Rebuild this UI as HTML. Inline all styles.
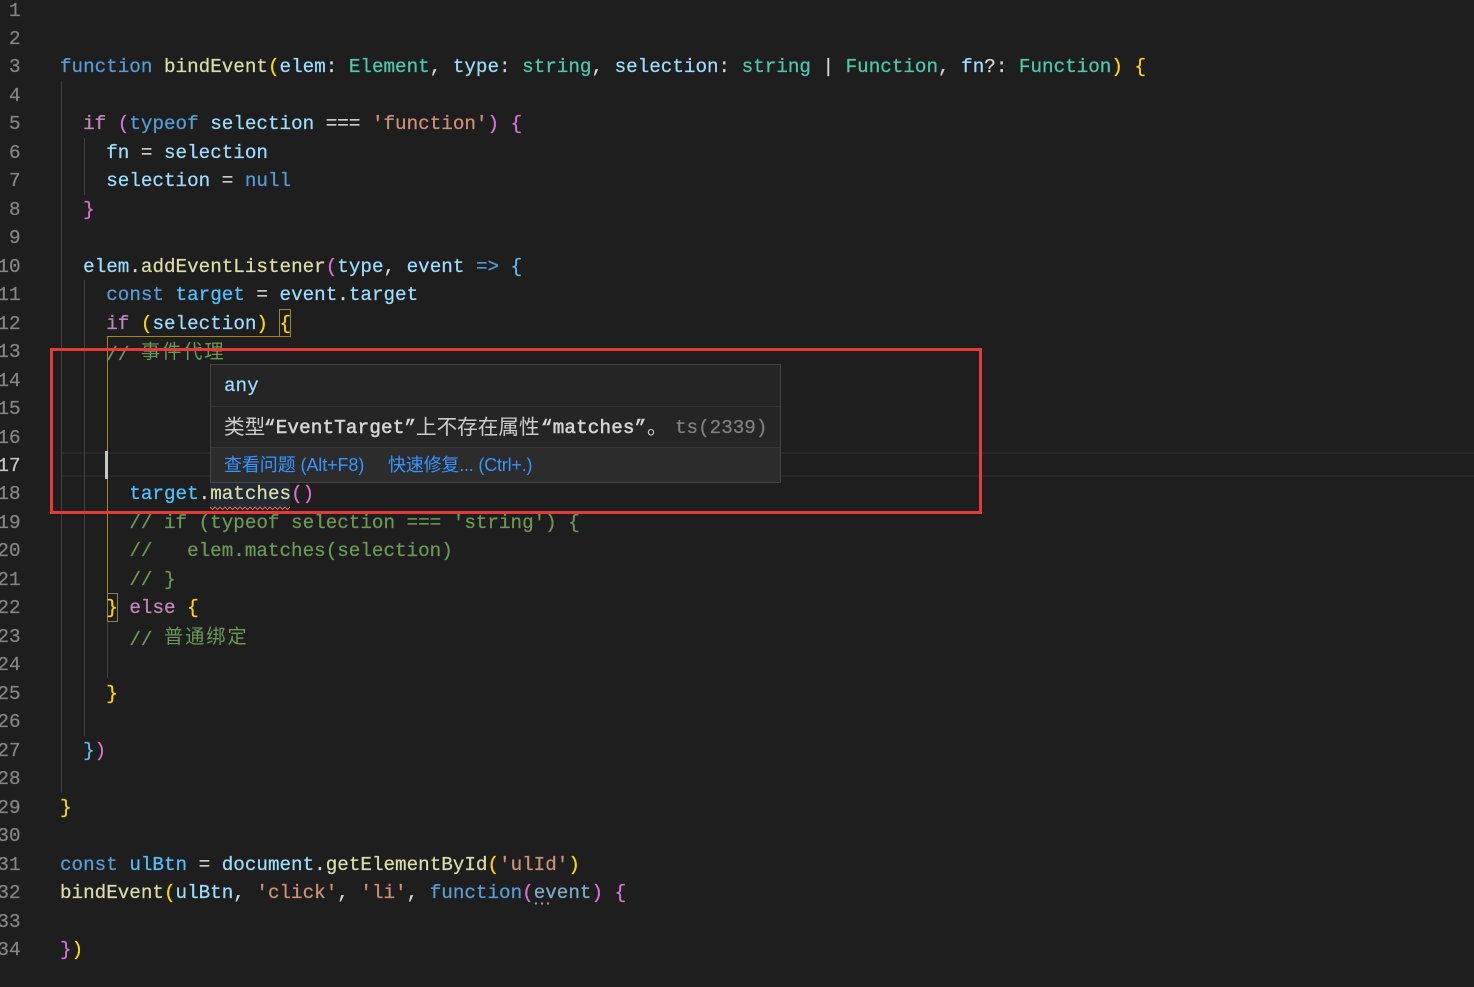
<!DOCTYPE html>
<html lang="zh"><head><meta charset="utf-8"><title>bindEvent</title>
<style>
html,body{margin:0;padding:0;background:#1e1e1e;width:1474px;height:987px;overflow:hidden}
body{position:relative}
.abs,.g{position:absolute}
#nums,#code{position:absolute;top:-3.5px;font:19.25px/28.48px "Liberation Mono","Noto Sans CJK SC",monospace;-webkit-text-stroke:.25px}
#nums{left:-10.5px;width:31px;text-align:right;color:#858585}
#nums div,#code div{height:28.48px;white-space:pre}
#code{left:60px;color:#d4d4d4}
.k{color:#569cd6}.c{color:#c586c0}.v{color:#9cdcfe}.f{color:#dcdcaa}.t{color:#4ec9b0}.s{color:#ce9178}.m{color:#6a9955}.y{color:#ffd700}.p{color:#da70d6}.b{color:#4fc1ff}.u{color:#60b8f0}
.z{font-family:"Noto Sans CJK SC",sans-serif;letter-spacing:1.9px;font-size:19.25px;-webkit-text-stroke:0;position:relative;top:-2px}
.g{background:#404040;width:1px}
.o{background:#a08a20}
#pop{position:absolute;left:210px;top:364px;width:569px;height:117px;background:#252526;border:1px solid #454545;color:#ccc}
#pop span{position:absolute;white-space:pre}
.mono{font:19.25px/28px "Liberation Mono",monospace;-webkit-text-stroke:.25px}
.bd{-webkit-text-stroke:.55px;color:#d4d4d4;letter-spacing:.15px}
.cjk{font:20.6px/28px "Noto Sans CJK SC",sans-serif}
.lnk{font:18px/24px "Liberation Sans","Noto Sans CJK SC",sans-serif;color:#3794ff;letter-spacing:-.1px}
</style></head><body>
<div class="abs" style="left:210px;top:480px;width:80px;height:27px;background:#232a33"></div>
<div class="abs" style="left:61px;top:452px;width:1413px;height:25px;border-top:2px solid #282828;border-bottom:2px solid #282828;box-sizing:border-box"></div>
<div class="g" style="left:61px;top:81px;height:712px"></div>
<div class="g" style="left:84px;top:138px;height:57px"></div>
<div class="g" style="left:84px;top:280px;height:456px"></div>
<div class="g o" style="left:107px;top:336px;height:257px"></div>
<div class="g" style="left:107px;top:621px;height:57px"></div>
<div class="g o" style="left:107px;top:336px;width:173px;height:1px"></div>
<div class="abs" style="left:279px;top:309px;width:10px;height:26px;border:1px solid #a08a20"></div>
<div class="abs" style="left:107px;top:593px;width:9px;height:27px;border:1px solid #8a8060"></div>
<div id="nums"><div>1</div><div>2</div><div>3</div><div>4</div><div>5</div><div>6</div><div>7</div><div>8</div><div>9</div><div>10</div><div>11</div><div>12</div><div>13</div><div>14</div><div>15</div><div>16</div><div style="color:#c6c6c6">17</div><div>18</div><div>19</div><div>20</div><div>21</div><div>22</div><div>23</div><div>24</div><div>25</div><div>26</div><div>27</div><div>28</div><div>29</div><div>30</div><div>31</div><div>32</div><div>33</div><div>34</div></div>
<div id="code"><div> </div><div> </div>
<div><span class="k">function</span> <span class="f">bindEvent</span><span class="y">(</span><span class="v">elem</span>: <span class="t">Element</span>, <span class="v">type</span>: <span class="t">string</span>, <span class="v">selection</span>: <span class="t">string</span> | <span class="t">Function</span>, <span class="v">fn</span>?: <span class="t">Function</span><span class="y">)</span> <span class="y">{</span></div>
<div> </div>
<div>  <span class="c">if</span> <span class="p">(</span><span class="k">typeof</span> <span class="v">selection</span> === <span class="s">'function'</span><span class="p">)</span> <span class="p">{</span></div>
<div>    <span class="v">fn</span> = <span class="v">selection</span></div>
<div>    <span class="v">selection</span> = <span class="k">null</span></div>
<div>  <span class="p">}</span></div>
<div> </div>
<div>  <span class="v">elem</span>.<span class="f">addEventListener</span><span class="p">(</span><span class="v">type</span>, <span class="v">event</span> <span class="k">=&gt;</span> <span class="u">{</span></div>
<div>    <span class="k">const</span> <span class="b">target</span> = <span class="v">event</span>.<span class="v">target</span></div>
<div>    <span class="c">if</span> <span class="y">(</span><span class="v">selection</span><span class="y">)</span> <span class="y">{</span></div>
<div>    <span class="m">// <span class="z">事件代理</span></span></div>
<div> </div><div> </div><div> </div><div> </div>
<div>      <span class="b">target</span>.<span class="f">matches</span><span class="p">()</span></div>
<div>      <span class="m">// if (typeof selection === 'string') {</span></div>
<div>      <span class="m">//   elem.matches(selection)</span></div>
<div>      <span class="m">// }</span></div>
<div>    <span class="y">}</span> <span class="c">else</span> <span class="y">{</span></div>
<div>      <span class="m">// <span class="z">普通绑定</span></span></div>
<div> </div>
<div>    <span class="y">}</span></div>
<div> </div>
<div>  <span class="u">}</span><span class="p">)</span></div>
<div> </div>
<div><span class="y">}</span></div>
<div> </div>
<div><span class="k">const</span> <span class="b">ulBtn</span> = <span class="v">document</span>.<span class="f">getElementById</span><span class="y">(</span><span class="s">'ulId'</span><span class="y">)</span></div>
<div><span class="f">bindEvent</span><span class="y">(</span><span class="v">ulBtn</span>, <span class="s">'click'</span>, <span class="s">'li'</span>, <span class="k">function</span><span class="p">(</span><span class="v" style="opacity:.75">event</span><span class="p">)</span> <span class="p">{</span></div>
<div> </div>
<div><span class="p">}</span><span class="y">)</span></div>
</div>
<svg class="abs" style="left:210px;top:505px" width="80" height="6"><path d="M0 2 l2.5 2.5 l2.5-2.5 l2.5 2.5 l2.5-2.5 l2.5 2.5 l2.5-2.5 l2.5 2.5 l2.5-2.5 l2.5 2.5 l2.5-2.5 l2.5 2.5 l2.5-2.5 l2.5 2.5 l2.5-2.5 l2.5 2.5 l2.5-2.5 l2.5 2.5 l2.5-2.5 l2.5 2.5 l2.5-2.5 l2.5 2.5 l2.5-2.5 l2.5 2.5 l2.5-2.5 l2.5 2.5 l2.5-2.5 l2.5 2.5 l2.5-2.5 l2.5 2.5 l2.5-2.5 l2.5 2.5 l2.5-2.5" fill="none" stroke="#d9695f" stroke-width="1"/></svg>
<svg class="abs" style="left:534px;top:902px" width="16" height="4"><path d="M1 1.5h2M7 1.5h2M13 1.5h2" stroke="#a0a0a0" stroke-width="2"/></svg>
<div class="abs" style="left:105px;top:451px;width:3px;height:28px;background:#c8c8c8"></div>
<div id="pop">
<span class="mono" style="left:13px;top:7px;color:#9cdcfe">any</span>
<div class="abs" style="left:0;top:41px;width:569px;height:1px;background:#333334"></div>
<span class="cjk" style="left:13px;top:46px">类型</span>
<span class="mono bd" style="left:53px;top:49px">“EventTarget”</span>
<span class="cjk" style="left:205px;top:46px">上不存在属性</span>
<span class="mono bd" style="left:330px;top:49px">“matches”</span>
<span class="cjk" style="left:436px;top:46px">。</span>
<span class="mono" style="left:464px;top:49px;color:#808080">ts(2339)</span>
<div class="abs" style="left:0;top:82px;width:569px;height:35px;background:#2c2c2d;border-top:1px solid #383839;box-sizing:border-box"></div>
<span class="lnk" style="left:13px;top:88px">查看问题 (Alt+F8)</span>
<span class="lnk" style="left:177px;top:88px;letter-spacing:-.2px">快速修复... (Ctrl+.)</span>
</div>
<div class="abs" style="left:50px;top:348px;width:932px;height:166px;border:3px solid #e53935;box-sizing:border-box"></div>
</body></html>
